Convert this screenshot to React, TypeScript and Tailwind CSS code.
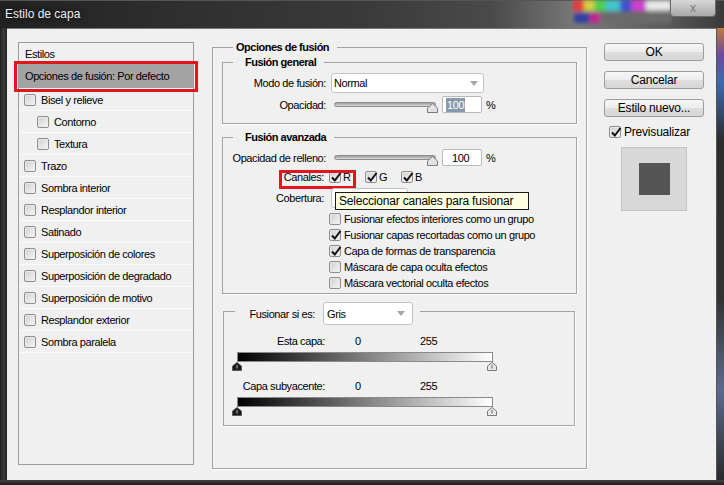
import React from 'react';

function Box({ checked }: { checked?: boolean }) {
  return (
    <span className="relative inline-block w-[12px] h-[12px] shrink-0 rounded-[2px] border border-[#8e8e8e] bg-[linear-gradient(135deg,#cfcfcf,#f6f6f6)] shadow-[inset_1px_1px_0_#e9e9e9]">
      {checked && (
        <svg className="absolute -left-[1px] -top-[2px] overflow-visible" width="14" height="14" viewBox="0 0 14 14">
          <path d="M3 7.5 L5.8 10.5 L11.5 3" fill="none" stroke="#111" strokeWidth="2" />
        </svg>
      )}
    </span>
  );
}

function Arrow() {
  return (
    <svg width="8" height="5" viewBox="0 0 8 5" className="shrink-0">
      <path d="M0 0 H8 L4 5 Z" fill="#a7a7a7" />
    </svg>
  );
}

function Slider() {
  return (
    <div className="relative ml-[8px] w-[104px] h-[17px]">
      <div className="absolute left-0 right-[2px] top-[6px] h-[5px] rounded-full border border-[#8d8d8d] bg-[linear-gradient(to_bottom,#9e9e9e,#d8d8d8)]" />
      <svg className="absolute right-0 top-[7px]" width="11" height="10" viewBox="0 0 11 10">
        <path d="M5.5 0.5 L10.5 5 V9.5 H0.5 V5 Z" fill="#e2e2e2" stroke="#7c7c7c" />
      </svg>
    </div>
  );
}

function Thumb({ dark }: { dark?: boolean }) {
  return (
    <svg width="10" height="9" viewBox="0 0 10 9" className="block shrink-0">
      <path d="M5 0.5 L9.5 4 V8.5 H0.5 V4 Z" fill={dark ? '#1a1a1a' : '#e6e6e6'} stroke={dark ? '#5a5a5a' : '#7a7a7a'} />
      <path d="M5 3 V6.5" stroke={dark ? '#bbb' : '#666'} strokeWidth="1" />
    </svg>
  );
}

function GradientRow({ label }: { label: string }) {
  return (
    <div className="flex flex-col">
      <div className="flex items-center h-[14px]">
        <span className="w-[101px] text-right">{label}</span>
        <span className="ml-[30px] w-[65px]">0</span>
        <span>255</span>
      </div>
      <div className="ml-[13px] mt-[4px] w-[256px] h-[10px] border border-[#8a8a8a] bg-[linear-gradient(to_right,#000,#fff)]" />
      <div className="flex h-[9px] ml-[8px]">
        <Thumb dark />
        <div className="ml-[245px]">
          <Thumb />
        </div>
      </div>
    </div>
  );
}

const styles = [
  { name: 'Bisel y relieve', indent: false },
  { name: 'Contorno', indent: true },
  { name: 'Textura', indent: true },
  { name: 'Trazo', indent: false },
  { name: 'Sombra interior', indent: false },
  { name: 'Resplandor interior', indent: false },
  { name: 'Satinado', indent: false },
  { name: 'Superposición de colores', indent: false },
  { name: 'Superposición de degradado', indent: false },
  { name: 'Superposición de motivo', indent: false },
  { name: 'Resplandor exterior', indent: false },
  { name: 'Sombra paralela', indent: false },
];

const options = [
  { text: 'Fusionar efectos interiores como un grupo', on: false },
  { text: 'Fusionar capas recortadas como un grupo', on: true },
  { text: 'Capa de formas de transparencia', on: true },
  { text: 'Máscara de capa oculta efectos', on: false },
  { text: 'Máscara vectorial oculta efectos', on: false },
];

export default function App() {
  return (
    <div className="w-[724px] h-[485px] flex flex-col bg-[#2a2a2a] text-[11px] leading-[14px] text-black tracking-[-0.4px] [font-family:'Liberation_Sans',Arial,sans-serif] overflow-hidden">
      {/* Title bar */}
      <div className="h-[28px] flex items-start bg-[linear-gradient(to_right,#222_0%,#2f2f2f_25%,#3a3a3a_50%,#4a4a4a_68%,#7a7a7a_80%,#5a5a5a_92%,#3a3a3a_100%)] shadow-[inset_0_1px_0_#555]">
        <span className="self-center ml-[5px] text-[12px] tracking-normal text-[#ececec] [text-shadow:0_0_6px_#000]">Estilo de capa</span>
        <div className="flex-1" />
        <svg width="100" height="28" viewBox="0 0 100 28" className="shrink-0 -mr-[2px]">
          <defs>
            <filter id="blur" x="-20%" y="-50%" width="140%" height="200%">
              <feGaussianBlur stdDeviation="2.2" />
            </filter>
          </defs>
          <g filter="url(#blur)">
            <rect x="0" y="0" width="12" height="11" fill="#e04040" />
            <rect x="12" y="0" width="10" height="11" fill="#d8d040" />
            <rect x="22" y="0" width="12" height="11" fill="#50d050" />
            <rect x="34" y="0" width="14" height="11" fill="#40c8d0" />
            <rect x="48" y="0" width="12" height="11" fill="#4050d0" />
            <rect x="60" y="0" width="14" height="11" fill="#d040d0" />
            <rect x="74" y="0" width="26" height="11" fill="#e8e8e8" />
            <rect x="2" y="13" width="16" height="10" fill="#3040a0" />
            <rect x="18" y="13" width="10" height="10" fill="#c02090" />
            <rect x="28" y="13" width="72" height="10" fill="#6a6a6a" />
          </g>
        </svg>
        <div className="w-[46px] h-[17px] mr-[8px] rounded-b-[4px] border border-t-0 border-[#6a6a6a] bg-[linear-gradient(to_bottom,#d8d8d8,#a8a8a8)] flex items-center justify-center text-[12px] text-[#7a7a7a] tracking-normal">
          x
        </div>
      </div>

      <div className="flex flex-1">
        <div className="w-[7px] bg-[linear-gradient(to_right,#1e1e1e,#3a3a3a_50%,#222)]" />

        {/* Client area */}
        <div className="w-[709px] bg-[#f0f0f0] flex items-start pt-[11px] pl-[11px] border-t border-[#777]">
          {/* Styles list */}
          <div className="mt-[2px] w-[176px] h-[423px] border border-[#9c9c9c] flex flex-col">
            <div className="h-[21px] flex items-center pl-[6px]">Estilos</div>
            <div className="relative h-[24px] flex items-center pl-[6px] bg-[#a3a3a3]">
              Opciones de fusión: Por defecto
              <div className="absolute -left-[5px] -right-[5px] -top-[3px] -bottom-[4px] border-[3px] border-[#e3141b]" />
            </div>
            {styles.map((s) => (
              <div
                key={s.name}
                className={`h-[22px] flex items-center gap-[5px] border-t border-[#fafafa] ${s.indent ? 'pl-[18px]' : 'pl-[5px]'}`}
              >
                <Box />
                <span>{s.name}</span>
              </div>
            ))}
            <div className="border-t border-[#fafafa]" />
          </div>

          {/* Blending options */}
          <fieldset className="ml-[18px] w-[375px] h-[429px] border border-[#a3a3a3] px-0 shadow-[1px_1px_0_#fff]">
            <legend className="ml-[20px] pl-[3px] pr-[8px] font-bold leading-[14px] tracking-[-0.5px]">Opciones de fusión</legend>

            <fieldset className="mx-[9px] mt-[1px] border border-[#a3a3a3] px-0 pb-[10px] shadow-[1px_1px_0_#fff]">
              <legend className="ml-[10px] pl-[12px] pr-[8px] font-bold leading-[14px] tracking-[-0.5px]">Fusión general</legend>
              <div className="flex items-center mt-[4px] h-[20px]">
                <span className="w-[103px] text-right">Modo de fusión:</span>
                <div className="ml-[5px] w-[153px] h-[20px] bg-white border border-[#c3c3c3] rounded-[3px] flex items-center pl-[2px] pr-[5px] justify-between">
                  <span>Normal</span>
                  <Arrow />
                </div>
              </div>
              <div className="flex items-center mt-[3px] h-[17px]">
                <span className="w-[103px] text-right">Opacidad:</span>
                <Slider />
                <div className="ml-[4px] w-[40px] h-[17px] bg-white border border-[#b9b9b9] rounded-[2px] flex items-center pl-[3px]">
                  <span className="bg-[#8a98ad] text-white px-[1px]">100</span>
                </div>
                <span className="ml-[4px]">%</span>
              </div>
            </fieldset>

            <fieldset className="mx-[9px] mt-[6px] border border-[#a3a3a3] px-0 pb-[2px] shadow-[1px_1px_0_#fff]">
              <legend className="ml-[10px] pl-[12px] pr-[8px] font-bold leading-[14px] tracking-[-0.5px]">Fusión avanzada</legend>
              <div className="flex items-center mt-[5px] h-[17px]">
                <span className="w-[103px] text-right">Opacidad de relleno:</span>
                <Slider />
                <div className="ml-[4px] w-[40px] h-[17px] bg-white border border-[#b9b9b9] rounded-[2px] flex items-center pl-[9px]">
                  100
                </div>
                <span className="ml-[4px]">%</span>
              </div>
              <div className="relative flex items-center mt-[3px] h-[16px]">
                <span className="w-[101px] text-right">Canales:</span>
                {['R', 'G', 'B'].map((c, i) => (
                  <div key={c} className={`flex items-center gap-[2px] w-[36px] ${i === 0 ? 'ml-[5px]' : ''}`}>
                    <Box checked />
                    <span>{c}</span>
                  </div>
                ))}
                <div className="absolute left-[56px] w-[77px] top-[1px] h-[19px] border-[3px] border-[#e3141b]" />
              </div>
              <div className="relative flex items-center mt-[3px] h-[20px]">
                <span className="w-[101px] text-right">Cobertura:</span>
                <div className="ml-[7px] w-[77px] h-[20px] bg-white border border-[#c3c3c3] rounded-[3px]" />
                <div className="absolute left-[112px] top-[4px] w-[194px] h-[18px] bg-[#ffffe1] border border-[#1a1a1a] flex items-center pl-[3px] text-[12px] tracking-[-0.2px]">
                  Seleccionar canales para fusionar
                </div>
              </div>
              <div className="mt-[3px] flex flex-col">
                {options.map((o) => (
                  <div key={o.text} className="h-[16px] flex items-center gap-[3px] ml-[106px]">
                    <Box checked={o.on} />
                    <span>{o.text}</span>
                  </div>
                ))}
              </div>
            </fieldset>

            <fieldset className="ml-[10px] mt-[8px] w-[352px] border border-[#a3a3a3] px-0 pb-[9px] shadow-[1px_1px_0_#fff]">
              <legend className="ml-[11px] pr-[7px] h-[18px] flex items-start">
                <span className="w-[80px] text-right mt-[5px]">Fusionar si es:</span>
                <div className="ml-[8px] w-[90px] h-[23px] shrink-0 bg-white border border-[#c3c3c3] rounded-[3px] flex items-center justify-between pl-[3px] pr-[7px]">
                  <span>Gris</span>
                  <Arrow />
                </div>
              </legend>
              <div className="mt-[14px]">
                <GradientRow label="Esta capa:" />
              </div>
              <div className="mt-[8px]">
                <GradientRow label="Capa subyacente:" />
              </div>
            </fieldset>
          </fieldset>

          {/* Buttons */}
          <div className="ml-[17px] mt-[3px] w-[100px] flex flex-col text-[12px] tracking-[-0.2px]">
            {['OK', 'Cancelar', 'Estilo nuevo...'].map((b, i) => (
              <div
                key={b}
                className={`h-[18px] rounded-[3px] border border-[#9d9d9d] bg-[linear-gradient(to_bottom,#f7f7f7_0%,#ececec_50%,#dedede_51%,#d6d6d6_100%)] flex items-center justify-center ${i > 0 ? 'mt-[10px]' : ''}`}
              >
                {b}
              </div>
            ))}
            <div className="mt-[8px] h-[14px] flex items-center gap-[3px] ml-[5px]">
              <Box checked />
              <span>Previsualizar</span>
            </div>
            <div className="mt-[8px] ml-[17px] w-[66px] h-[64px] bg-[#d8d8d8] border border-[#c4c4c4] flex items-center justify-center">
              <div className="w-[31px] h-[32px] bg-[#555555]" />
            </div>
          </div>
        </div>

        <div className="w-[8px] bg-[linear-gradient(to_bottom,#c07a3a_0%,#6a4aa0_6%,#3a6ab0_12%,#2c2c2c_25%,#333_60%,#5a6a90_80%,#2a2a2a_100%)] border-l border-[#555]" />
      </div>
      <div className="h-[5px] bg-[linear-gradient(to_bottom,#444,#1e1e1e)]" />
    </div>
  );
}
